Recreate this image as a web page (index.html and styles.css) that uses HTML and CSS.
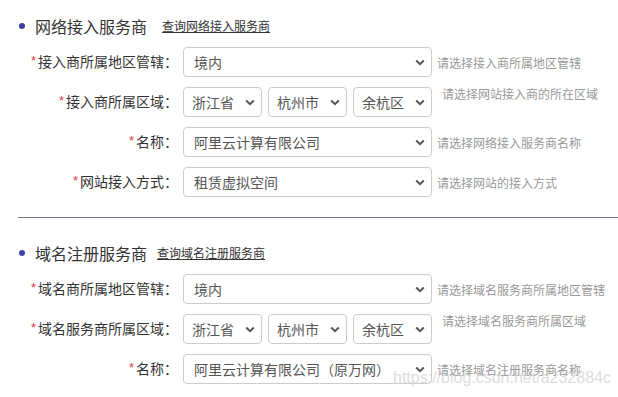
FILE: index.html
```html
<html lang="zh-CN"><head>
  <meta charset="UTF-8">
  <title>备案信息</title>
  <link rel="stylesheet" href="styles.css">
</head>
<body>
  <div class="container">

    <div class="section">
      <div class="section-head">
        <span class="dot"></span>
        <span class="section-title">网络接入服务商</span>
        <a class="section-link" href="#">查询网络接入服务商</a>
      </div>

      <div class="row">
        <div class="label"><span class="star">*</span>接入商所属地区管辖：</div>
        <div class="select wide"><span>境内</span><svg class="chev" width="10" height="7" viewBox="0 0 10 7"><path d="M1.2 1.5 L5 5.2 L8.8 1.5" fill="none" stroke="#555" stroke-width="2"/></svg></div>
        <div class="hint">请选择接入商所属地区管辖</div>
      </div>

      <div class="row">
        <div class="label"><span class="star">*</span>接入商所属区域：</div>
        <div class="select-group">
          <div class="select small"><span>浙江省</span><svg class="chev" width="10" height="7" viewBox="0 0 10 7"><path d="M1.2 1.5 L5 5.2 L8.8 1.5" fill="none" stroke="#555" stroke-width="2"/></svg></div>
          <div class="select small"><span>杭州市</span><svg class="chev" width="10" height="7" viewBox="0 0 10 7"><path d="M1.2 1.5 L5 5.2 L8.8 1.5" fill="none" stroke="#555" stroke-width="2"/></svg></div>
          <div class="select small"><span>余杭区</span><svg class="chev" width="10" height="7" viewBox="0 0 10 7"><path d="M1.2 1.5 L5 5.2 L8.8 1.5" fill="none" stroke="#555" stroke-width="2"/></svg></div>
        </div>
        <div class="hint hint-top">请选择网站接入商的所在区域</div>
      </div>

      <div class="row">
        <div class="label"><span class="star">*</span>名称：</div>
        <div class="select wide"><span>阿里云计算有限公司</span><svg class="chev" width="10" height="7" viewBox="0 0 10 7"><path d="M1.2 1.5 L5 5.2 L8.8 1.5" fill="none" stroke="#555" stroke-width="2"/></svg></div>
        <div class="hint">请选择网络接入服务商名称</div>
      </div>

      <div class="row">
        <div class="label"><span class="star">*</span>网站接入方式：</div>
        <div class="select wide"><span>租赁虚拟空间</span><svg class="chev" width="10" height="7" viewBox="0 0 10 7"><path d="M1.2 1.5 L5 5.2 L8.8 1.5" fill="none" stroke="#555" stroke-width="2"/></svg></div>
        <div class="hint">请选择网站的接入方式</div>
      </div>
    </div>

    <div class="separator"></div>

    <div class="section">
      <div class="section-head">
        <span class="dot"></span>
        <span class="section-title">域名注册服务商</span>
        <a class="section-link link-near" href="#">查询域名注册服务商</a>
      </div>

      <div class="row">
        <div class="label"><span class="star">*</span>域名商所属地区管辖：</div>
        <div class="select wide"><span>境内</span><svg class="chev" width="10" height="7" viewBox="0 0 10 7"><path d="M1.2 1.5 L5 5.2 L8.8 1.5" fill="none" stroke="#555" stroke-width="2"/></svg></div>
        <div class="hint">请选择域名服务商所属地区管辖</div>
      </div>

      <div class="row">
        <div class="label"><span class="star">*</span>域名服务商所属区域：</div>
        <div class="select-group">
          <div class="select small"><span>浙江省</span><svg class="chev" width="10" height="7" viewBox="0 0 10 7"><path d="M1.2 1.5 L5 5.2 L8.8 1.5" fill="none" stroke="#555" stroke-width="2"/></svg></div>
          <div class="select small"><span>杭州市</span><svg class="chev" width="10" height="7" viewBox="0 0 10 7"><path d="M1.2 1.5 L5 5.2 L8.8 1.5" fill="none" stroke="#555" stroke-width="2"/></svg></div>
          <div class="select small"><span>余杭区</span><svg class="chev" width="10" height="7" viewBox="0 0 10 7"><path d="M1.2 1.5 L5 5.2 L8.8 1.5" fill="none" stroke="#555" stroke-width="2"/></svg></div>
        </div>
        <div class="hint hint-top">请选择域名服务商所属区域</div>
      </div>

      <div class="row">
        <div class="label"><span class="star">*</span>名称：</div>
        <div class="select wide"><span>阿里云计算有限公司（原万网）</span><svg class="chev" width="10" height="7" viewBox="0 0 10 7"><path d="M1.2 1.5 L5 5.2 L8.8 1.5" fill="none" stroke="#555" stroke-width="2"/></svg></div>
        <div class="hint">请选择域名注册服务商名称</div>
      </div>
    </div>

  </div>

  <div class="watermark">https://blog.csdn.net/a232884c</div>
</body></html>
```

FILE: styles.css
```css
body {
  margin: 0;
  background-color: #ffffff;
  font-family: "Noto Sans CJK SC", "Noto Sans", sans-serif;
  color: #333;
  overflow: hidden;
}
.container {
  padding-top: 16px;
}
.section-head {
  display: flex;
  align-items: center;
  height: 20px;
  padding-left: 19px;
  margin-bottom: 11px;
}
.dot {
  width: 6px;
  height: 6px;
  border-radius: 50%;
  background-color: #3a44a0;
  margin-right: 10px;
}
.section-title {
  font-size: 16px;
  line-height: 20px;
  color: #333;
}
.section-link {
  font-size: 12px;
  line-height: 20px;
  color: #333;
  text-decoration: underline;
  margin-left: 15px;
}
.link-near {
  margin-left: 10px;
}
.row {
  display: flex;
  align-items: center;
  height: 30px;
  margin-bottom: 10px;
}
.label {
  width: 178px;
  margin-right: 5px;
  text-align: right;
  font-size: 14px;
  line-height: 30px;
  color: #333;
  white-space: nowrap;
}
.star {
  color: #e4393c;
  font-family: "Liberation Sans", sans-serif;
  font-size: 13px;
  margin-right: 2px;
  position: relative;
  top: -2px;
}
.select {
  box-sizing: border-box;
  height: 30px;
  border: 1px solid #cccccc;
  border-radius: 4px;
  display: flex;
  align-items: center;
  justify-content: space-between;
  padding: 0 6px 0 10px;
  font-size: 14px;
  color: #555;
  background-color: #fff;
}
.select.wide {
  width: 249px;
}
.select-group {
  display: flex;
  gap: 6px;
  width: 249px;
}
.select.small {
  width: 79px;
  padding-left: 8px;
}
.chev {
  flex: none;
}
.hint {
  margin-left: 5px;
  font-size: 12px;
  color: #999;
  white-space: nowrap;
}
.hint-top {
  align-self: flex-start;
  margin-left: 10px;
  line-height: 14px;
}
.separator {
  margin: 20px 0 25px 18px;
  height: 1px;
  background-color: #6b7783;
}
.watermark {
  position: absolute;
  left: 393px;
  top: 369px;
  font-family: "Liberation Sans", sans-serif;
  font-size: 16px;
  line-height: 18px;
  color: rgba(190, 190, 190, 0.55);
  white-space: nowrap;
}
```
